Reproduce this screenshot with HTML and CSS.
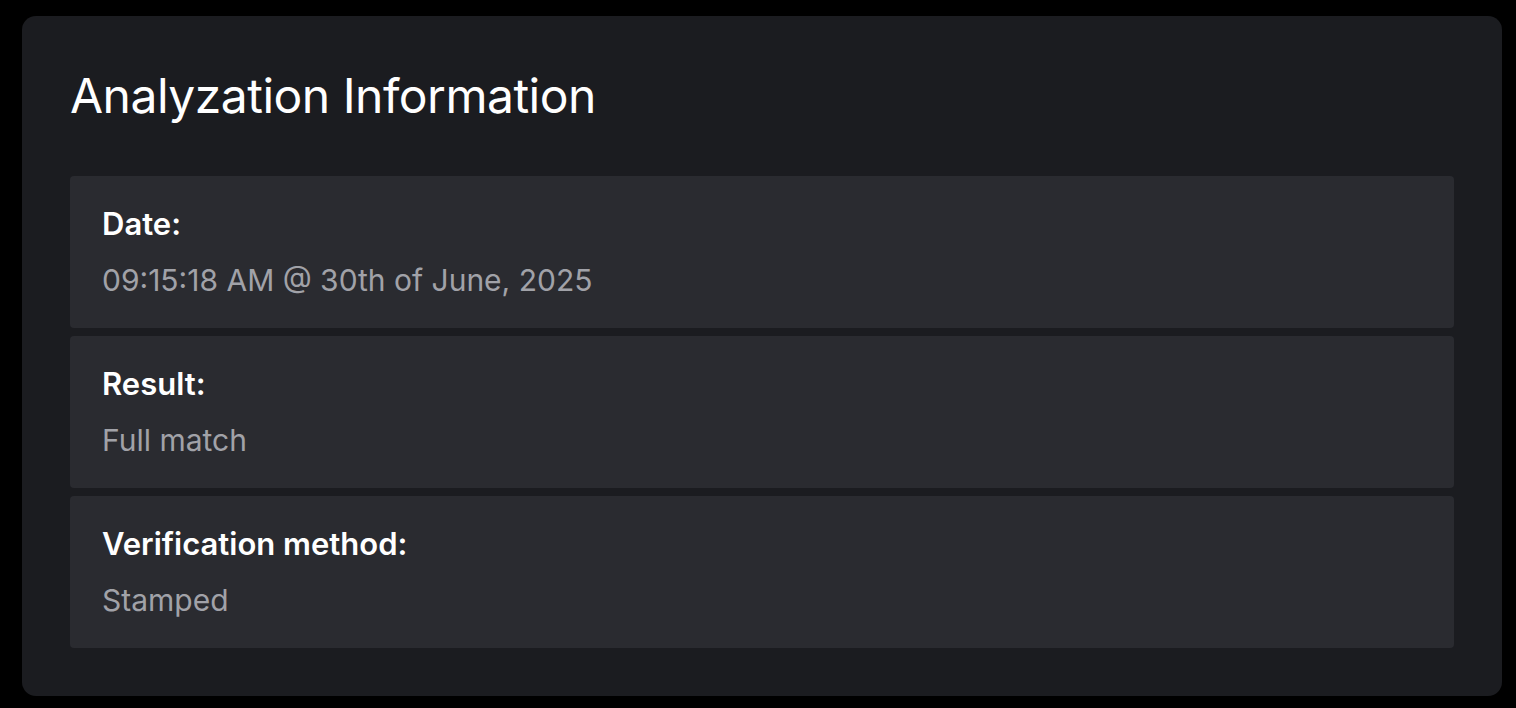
FILE: index.html
```html
<!DOCTYPE html>
<html lang="en">
<head>
<meta charset="utf-8">
<title>Analyzation Information</title>
<link rel="stylesheet" href="styles.css">
</head>
<body>
<main class="card">
  <h1 class="card-title">Analyzation Information</h1>
  <div class="info-list">
    <section class="info-item">
      <div class="info-label">Date:</div>
      <div class="info-value">09:15:18 AM @ 30th of June, 2025</div>
    </section>
    <section class="info-item">
      <div class="info-label">Result:</div>
      <div class="info-value">Full match</div>
    </section>
    <section class="info-item">
      <div class="info-label">Verification method:</div>
      <div class="info-value">Stamped</div>
    </section>
  </div>
</main>
</body>
</html>
```

FILE: styles.css
```css
html, body {
  margin: 0;
  padding: 0;
  background: #000;
}
body {
  font-family: Inter, "Noto Sans", sans-serif;
  padding: 16px 14px 12px 22px;
}
.card {
  background: #1b1c20;
  border-radius: 14px;
  padding: 48px;
}
.card-title {
  margin: 0 0 48px 0;
  color: #ffffff;
  font-weight: 400;
  font-size: 48px;
  line-height: 64px;
  letter-spacing: -0.5px;
  height: 64px;
}
.info-list {
  display: flex;
  flex-direction: column;
  gap: 8px;
}
.info-item {
  background: #2a2b30;
  border-radius: 4px;
  padding: 30px 32px 0 32px;
  height: 152px;
  box-sizing: border-box;
  display: flex;
  flex-direction: column;
  gap: 20px;
}
.info-label {
  color: #ffffff;
  font-weight: 600;
  font-size: 31px;
  line-height: 36px;
}
.info-value {
  color: #a1a2a8;
  font-weight: 400;
  font-size: 30px;
  line-height: 36px;
}
```
